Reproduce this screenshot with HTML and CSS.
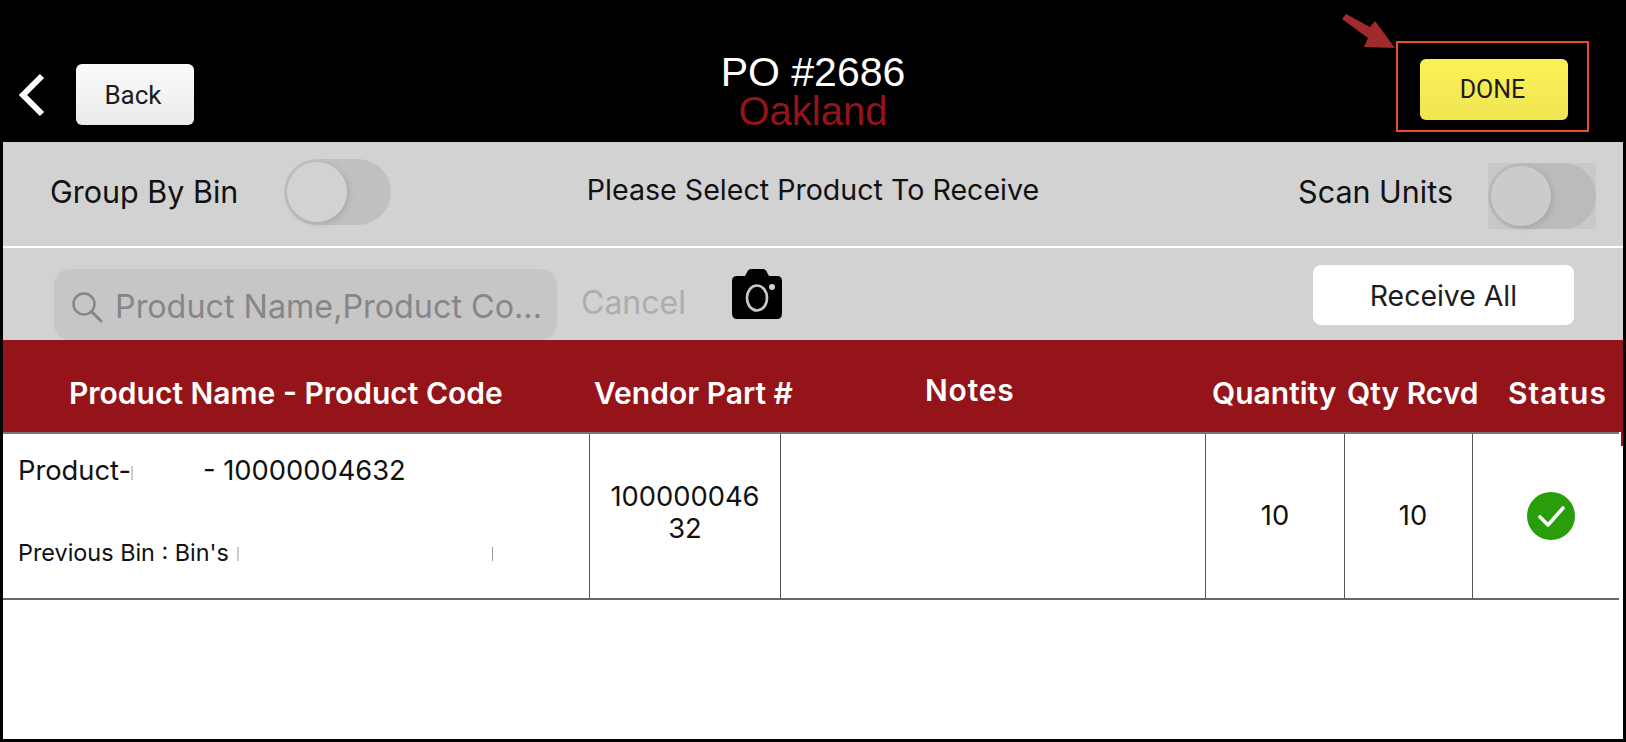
FILE: index.html
```html
<!DOCTYPE html>
<html lang="en">
<head>
    <meta charset="UTF-8">
    <title>PO #2686</title>
    <link rel="stylesheet" href="styles.css">
</head>
<body>
    <header class="topbar">
        <div class="topbar-left">
            <svg class="chevron" width="30" height="46" viewBox="0 0 30 46"><path d="M25 4 L6 23 L25 42" fill="none" stroke="#fff" stroke-width="6" stroke-linecap="butt" stroke-linejoin="miter"/></svg>
            <button class="btn-back">Back</button>
        </div>
        <div class="title">
            <div class="title-po">PO #2686</div>
            <div class="title-place">Oakland</div>
        </div>
        <div class="topbar-right">
            <button class="btn-done">DONE</button>
        </div>
        <!-- annotation on top of the screenshot -->
        <svg class="note-arrow" width="60" height="42" viewBox="0 0 60 42"><path d="M2 5 L6 0 L30 13 L35 7 L55 34 L24 33 L28 24 Z" fill="#a12a2c"/></svg>
        <div class="note-box"></div>
    </header>

    <section class="controls">
        <div class="controls-top">
            <div class="group-by">
                <span class="label">Group By Bin</span>
                <span class="toggle"><span class="knob"></span></span>
            </div>
            <div class="prompt">Please Select Product To Receive</div>
            <div class="scan-units">
                <span class="label">Scan Units</span>
                <span class="toggle-box"><span class="toggle toggle-dim"><span class="knob"></span></span></span>
            </div>
        </div>
        <div class="controls-bottom">
            <div class="search">
                <svg width="34" height="34" viewBox="0 0 34 34"><circle cx="14" cy="14" r="10.5" fill="none" stroke="#86868a" stroke-width="2.4"/><path d="M22 22 L31 31" stroke="#86868a" stroke-width="3" stroke-linecap="round"/></svg>
                <span class="search-text">Product Name,Product Co...</span>
            </div>
            <span class="cancel">Cancel</span>
            <svg class="camera" width="52" height="50" viewBox="0 0 52 50"><path d="M6 7 H14 L17 1.5 Q18 0 20 0 H32 Q34 0 35 1.5 L38 7 H46 Q51 7 51 12 V44 Q51 50 46 50 H6 Q1 50 1 44 V12 Q1 7 6 7 Z" fill="#000"/><ellipse cx="26" cy="29" rx="10" ry="12.5" fill="none" stroke="#c9c9c9" stroke-width="2.6"/><circle cx="41" cy="18" r="3" fill="#d2d2d2"/></svg>
            <button class="btn-receive">Receive All</button>
        </div>
    </section>

    <div class="table-head">
        <div>Product Name - Product Code</div>
        <div>Vendor Part #</div>
        <div class="th-notes">Notes</div>
        <div>Quantity</div>
        <div>Qty Rcvd</div>
        <div class="th-status">Status</div>
    </div>
    <div class="table-body">
        <div class="table-row">
            <div class="cell cell-product">
                <div class="product-name">Product-<span class="sliver"></span><span class="hidden-part"></span>- 10000004632</div>
                <div class="product-bin">Previous Bin : Bin's<span class="sliver sliver-a"></span><span class="sliver sliver-b"></span></div>
            </div>
            <div class="cell cell-center cell-vendor">100000046<br>32</div>
            <div class="cell"></div>
            <div class="cell cell-center">10</div>
            <div class="cell cell-center cell-shift">10</div>
            <div class="cell cell-center cell-shift">
                <svg width="48" height="48" viewBox="0 0 48 48"><circle cx="24" cy="24" r="24" fill="#2a9d0a"/><path d="M13 25 L21 33 L36 16" fill="none" stroke="#fff" stroke-width="3.6" stroke-linecap="round" stroke-linejoin="round"/></svg>
            </div>
        </div>
    </div>
</body>
</html>
```

FILE: styles.css
```css
* {
    box-sizing: border-box;
}
body {
    margin: 0;
    width: 1626px;
    height: 742px;
    overflow: hidden;
    background-color: #000;
    border-left: 3px solid #000;
    border-right: 3px solid #000;
    border-bottom: 3px solid #000;
    font-family: Inter, "Liberation Sans", sans-serif;
    color: #111;
    display: flex;
    flex-direction: column;
}
button {
    border: none;
    font-family: Roboto, sans-serif;
    color: #1c1c1c;
    padding: 0;
}

/* top bar */
.topbar {
    position: relative;
    height: 142px;
    flex: none;
    display: grid;
    grid-template-columns: 1fr auto 1fr;
    align-items: end;
    margin-left: -3px;
    margin-right: -3px;
    background-color: #000;
}
.topbar-left {
    display: flex;
    align-items: center;
    padding-left: 17px;
    padding-bottom: 17px;
}
.chevron {
    margin-right: 29px;
}
.btn-back {
    width: 118px;
    height: 61px;
    border-radius: 6px;
    font-size: 26px;
    padding-right: 4px;
    background: linear-gradient(#fbfbfb, #ebebeb);
}
.title {
    text-align: center;
    font-family: "Liberation Sans", sans-serif;
    padding-bottom: 12px;
}
.title-po {
    color: #fff;
    font-size: 41px;
    line-height: 38px;
    margin-bottom: 1px;
}
.title-place {
    color: #941419;
    font-size: 40px;
    line-height: 38px;
}
.topbar-right {
    display: flex;
    justify-content: flex-end;
    padding-right: 58px;
    padding-bottom: 22px;
}
.btn-done {
    width: 148px;
    height: 61px;
    border-radius: 6px;
    font-size: 25px;
    padding-right: 3px;
    background: linear-gradient(#fbf157, #f1e652);
}
.note-arrow {
    position: absolute;
    left: 1340px;
    top: 14px;
}
.note-box {
    position: absolute;
    left: 1396px;
    top: 41px;
    width: 193px;
    height: 91px;
    border: 2px solid #ee4a2c;
}

/* gray controls */
.controls {
    height: 198px;
    flex: none;
    background-color: #d2d2d2;
}
.controls-top {
    height: 106px;
    border-bottom: 2px solid #fff;
    display: grid;
    grid-template-columns: 1fr auto 1fr;
    align-items: center;
    font-size: 30.5px;
}
.group-by {
    display: flex;
    align-items: center;
    padding-left: 47px;
    margin-top: -5px;
}
.group-by .toggle {
    margin-left: 46px;
}
.prompt {
    font-size: 28.6px;
    margin-top: -9px;
}
.scan-units {
    display: flex;
    align-items: center;
    justify-content: flex-end;
    padding-right: 27px;
    margin-top: -2px;
}
.scan-units .label {
    margin-top: -4px;
}
.toggle-box {
    display: block;
    margin-left: 35px;
    margin-top: 6px;
    background-color: #c8c8c8;
}
.toggle {
    display: block;
    width: 107px;
    height: 66px;
    border-radius: 33px;
    background: #c0c0c2;
    padding: 3px;
}
.toggle-dim {
    width: 108px;
    background: #bbb;
}
.knob {
    display: block;
    width: 60px;
    height: 60px;
    border-radius: 50%;
    background-color: #d2d2d2;
    box-shadow: 2px 2px 6px rgba(0, 0, 0, 0.12);
}
.toggle-dim .knob {
    background-color: #cbcbcb;
}
.controls-bottom {
    height: 92px;
    display: flex;
    align-items: flex-end;
}
.search {
    width: 503px;
    height: 71px;
    margin-left: 51px;
    border-radius: 16px;
    background-color: #c6c6c6;
    display: flex;
    align-items: center;
    padding-left: 16px;
    color: #86868a;
    font-size: 32.3px;
    padding-top: 4px;
}
.search-text {
    margin-left: 11px;
    white-space: nowrap;
}
.cancel {
    align-self: center;
    margin-left: 24px;
    color: #adadad;
    font-size: 32px;
    margin-top: 16px;
}
.camera {
    align-self: flex-start;
    margin-top: 21px;
    margin-left: 45px;
}
.btn-receive {
    align-self: flex-start;
    margin-top: 17px;
    margin-left: 530px;
    width: 261px;
    height: 60px;
    border-radius: 8px;
    background-color: #fff;
    font-family: Inter, sans-serif;
    font-size: 28.4px;
}

/* table */
.table-head {
    height: 92px;
    flex: none;
    background-color: #941419;
    color: #fff;
    font-weight: 600;
    font-size: 30px;
    display: grid;
    grid-template-columns: 525px 331px 287px 135px 161px 1fr;
    align-items: center;
    padding-left: 66px;
    padding-top: 14px;
    white-space: nowrap;
}
.th-notes {
    margin-top: -6px;
    letter-spacing: 0.8px;
}
.th-status {
    letter-spacing: 1px;
}
.table-body {
    flex: 1;
    position: relative;
    background-color: #fff;
    padding-right: 4px;
}
/* red sliver the header leaves on the right edge */
.table-body::after {
    content: "";
    position: absolute;
    right: 0;
    top: 0;
    width: 2px;
    height: 14px;
    background-color: #941419;
}
.table-row {
    height: 168px;
    display: grid;
    grid-template-columns: 587px 191px 425px 139px 128px 146px;
    border-top: 2px solid #777;
    border-bottom: 2px solid #666;
    font-size: 27.3px;
}
.cell {
    border-right: 1px solid #555;
}
.cell:last-child {
    border-right: none;
}
.cell-center {
    display: flex;
    align-items: center;
    justify-content: center;
    text-align: center;
    line-height: 32px;
}
.cell-vendor {
    padding-bottom: 6px;
}
.cell-shift {
    padding-left: 9px;
}
.cell-product {
    padding: 21px 0 0 15px;
}
.product-name {
    line-height: 32px;
}
.hidden-part {
    display: inline-block;
    width: 70px;
}
.sliver {
    display: inline-block;
    width: 2px;
    height: 14px;
    background-color: #ccc;
}
.sliver-a {
    margin-left: 8px;
}
.sliver-b {
    width: 1px;
    margin-left: 253px;
    background-color: #999;
}
.product-bin {
    font-size: 23.4px;
    margin-top: 51px;
}
```
